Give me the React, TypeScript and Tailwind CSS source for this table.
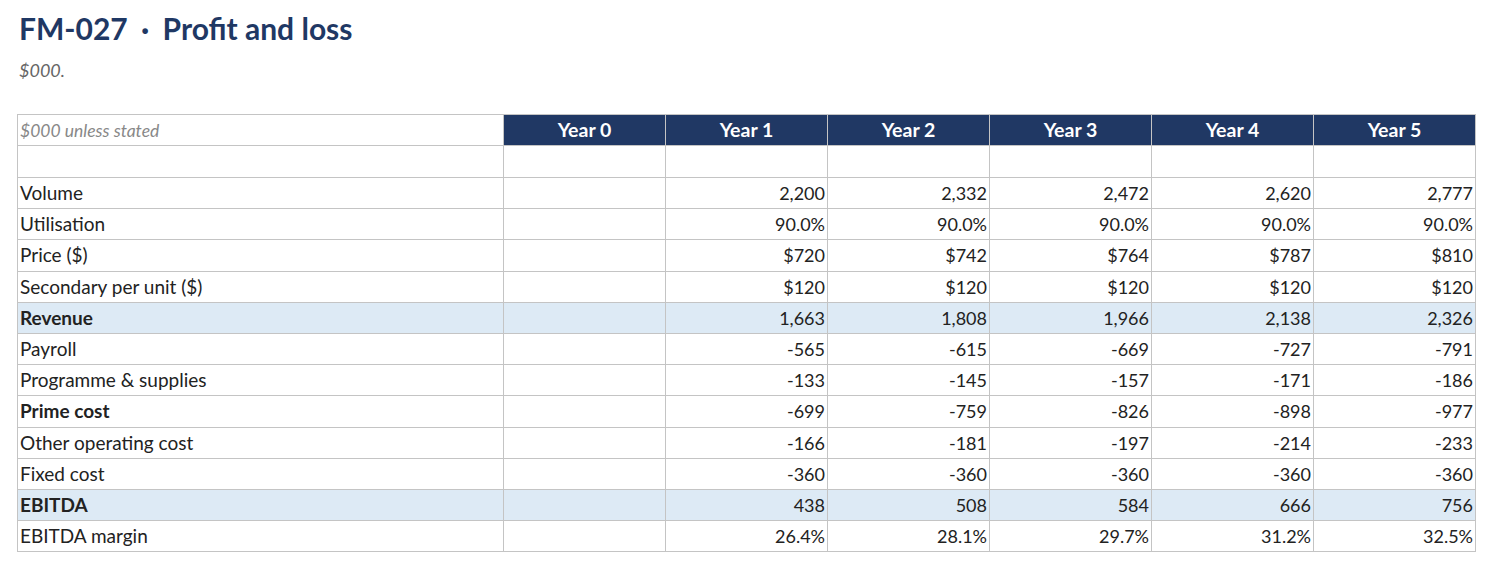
const years = ["Year 0", "Year 1", "Year 2", "Year 3", "Year 4", "Year 5"];

type Row = { label: string; values: string[]; bold?: boolean; shaded?: boolean };

const rows: Row[] = [
  { label: "Volume", values: ["", "2,200", "2,332", "2,472", "2,620", "2,777"] },
  { label: "Utilisation", values: ["", "90.0%", "90.0%", "90.0%", "90.0%", "90.0%"] },
  { label: "Price ($)", values: ["", "$720", "$742", "$764", "$787", "$810"] },
  { label: "Secondary per unit ($)", values: ["", "$120", "$120", "$120", "$120", "$120"] },
  { label: "Revenue", values: ["", "1,663", "1,808", "1,966", "2,138", "2,326"], bold: true, shaded: true },
  { label: "Payroll", values: ["", "-565", "-615", "-669", "-727", "-791"] },
  { label: "Programme & supplies", values: ["", "-133", "-145", "-157", "-171", "-186"] },
  { label: "Prime cost", values: ["", "-699", "-759", "-826", "-898", "-977"], bold: true },
  { label: "Other operating cost", values: ["", "-166", "-181", "-197", "-214", "-233"] },
  { label: "Fixed cost", values: ["", "-360", "-360", "-360", "-360", "-360"] },
  { label: "EBITDA", values: ["", "438", "508", "584", "666", "756"], bold: true, shaded: true },
  { label: "EBITDA margin", values: ["", "26.4%", "28.1%", "29.7%", "31.2%", "32.5%"] },
];

export default function App() {
  return (
    <div className="min-h-[569px] bg-white px-[17px] pt-[10px] font-['Lato',sans-serif] text-[#222]">
      <h1 className="pl-[2px] text-[30px] font-bold leading-[36px] text-[#1f3864]">
        FM-027 <span className="mx-[6px]">·</span> Profit and loss
      </h1>
      <p className="mt-[13px] pl-[2px] text-[18px] italic leading-[22px] text-[#666]">$000.</p>

      <table className="mt-[33px] w-[1458px] table-fixed border-collapse border border-[#bdbdbd] leading-[22px]">
        <colgroup>
          <col className="w-[486px]" />
          {years.map((y) => (
            <col key={y} className="w-[162px]" />
          ))}
        </colgroup>
        <thead>
          <tr className="h-[31px]">
            <th className="border border-[#c4c4c4] px-[2px] pt-[2px] text-left text-[17.5px] font-normal italic text-[#888]">
              $000 unless stated
            </th>
            {years.map((y) => (
              <th key={y} className="border border-[#c4c4c4] bg-[#203864] text-center text-[19.5px] font-bold text-white">
                {y}
              </th>
            ))}
          </tr>
        </thead>
        <tbody>
          <tr className="h-[32px]">
            <td className="border border-[#c4c4c4]" />
            {years.map((y) => (
              <td key={y} className="border border-[#c4c4c4]" />
            ))}
          </tr>
          {rows.map((r) => (
            <tr key={r.label} className={`h-[31.2px] ${r.shaded ? "bg-[#ddeaf5]" : ""}`}>
              <td className={`border border-[#c4c4c4] px-[2px] text-left text-[19px] ${r.bold ? "font-bold" : ""}`}>
                {r.label}
              </td>
              {r.values.map((v, i) => (
                <td key={i} className="border border-[#c4c4c4] px-[2px] text-right text-[18px]">
                  {v}
                </td>
              ))}
            </tr>
          ))}
        </tbody>
      </table>
    </div>
  );
}
